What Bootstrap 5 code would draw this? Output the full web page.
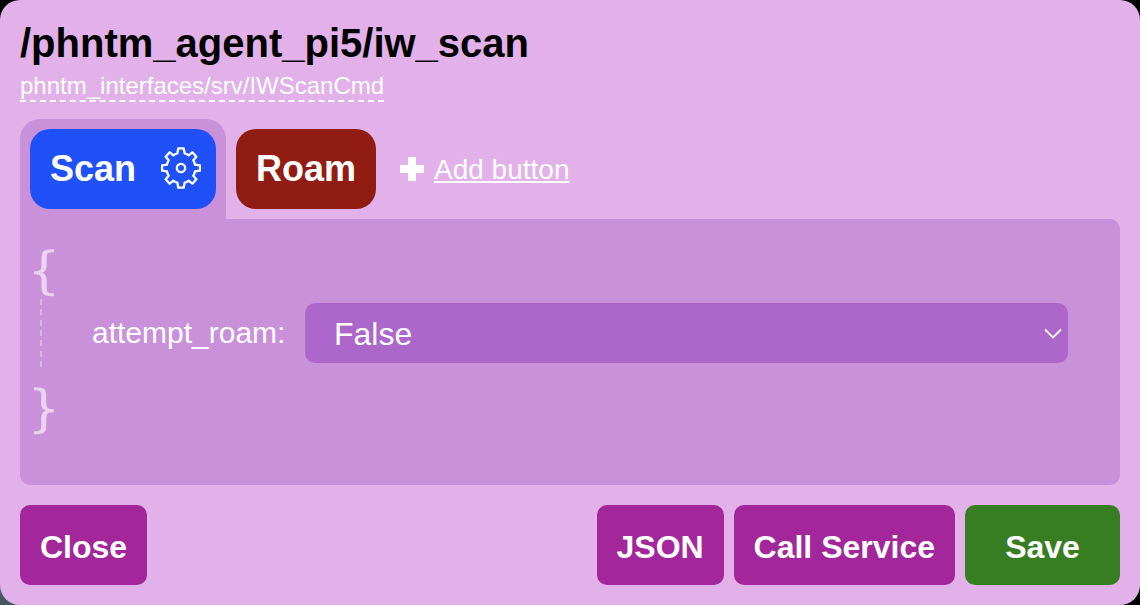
<!DOCTYPE html>
<html lang="en">
<head>
<meta charset="utf-8">
<meta name="viewport" content="width=device-width, initial-scale=1">
<title>Service input</title>
<link rel="stylesheet" href="https://cdn.jsdelivr.net/npm/bootstrap@5.3.0/dist/css/bootstrap.min.css">
<style>
body { background: linear-gradient(90deg, #46585f 0 50%, #000 50%) bottom / 100% 40px no-repeat #000; font-family: "Liberation Sans", Arial, sans-serif; color: #fff; }
.dialog-box { height: 605px; padding: 20px; background: #e2b1e9; border-radius: 20px; }
.dialog-title { font-size: 40px; line-height: 46px; font-weight: 700; color: #000; }
.msg-type { font-size: 24px; line-height: 28px; height: 30px; margin-top: 6px; color: #fff; border-bottom: 2px dashed #fff; text-decoration: none; }
.tab-strip { margin-top: 17px; height: 100px; }
.tab-active { padding: 10px; background: #ca91db; border-radius: 20px 20px 0 0; }
.tab-btn { height: 80px; padding: 0 20px; border: 0; border-radius: 20px; font-size: 36px; font-weight: 700; line-height: 80px; color: #fff; }
.tab-scan { width: 186px; padding-right: 15px; background: #2050f8; }
.tab-scan svg { margin-bottom: 2px; }
.tab-roam { width: 140px; background: #911c13; margin: 10px 0 0 10px; }
.add-link { margin-left: 24px; gap: 10px; font-size: 28px; line-height: 32px; color: #fff; }
.add-link span { padding-top: 2px; text-decoration: underline; text-decoration-thickness: 2px; text-underline-offset: 2px; }
.editor { height: 266px; padding: 22px 52px 0 12px; background: #ca91db; border-radius: 0 10px 10px 10px; }
.brace { height: 58px; margin-left: -4px; font: 50px/60px "DejaVu Serif", serif; color: #ecd3f2; -webkit-text-stroke: .4px #ecd3f2; }
.fields { height: 68px; margin: 0 0 12px 8px; }
.guide { width: 2px; background: repeating-linear-gradient(#dcb5e7 0 6px, transparent 6px 10.35px); }
.field-label { margin-left: 50px; width: 213px; padding-bottom: 1px; font-size: 30px; }
.field-select { height: 60px; padding: 0 6px 0 29px; border-radius: 10px; background: #ad66ca; font-size: 32px; }
.field-select span { padding-top: 1px; }
.field-select svg { margin-top: 2px; }
.dialog-foot { margin-top: 20px; gap: 10px; }
.foot-btn { height: 80px; padding: 4px 20px 0; border: 0; border-radius: 10px; background: #a3269b; color: #fff; font-size: 32px; font-weight: 700; line-height: 77px; white-space: nowrap; }
.foot-json { width: 127px; }
.foot-save { width: 155px; background: #377d22; }
</style>
</head>
<body>
<main class="dialog-box d-flex flex-column overflow-hidden">
  <h1 class="dialog-title m-0">/phntm_agent_pi5/iw_scan</h1>
  <a href="#" class="msg-type align-self-start">phntm_interfaces/srv/IWScanCmd</a>

  <div class="tab-strip d-flex flex-shrink-0">
    <div class="tab-active">
      <button class="btn tab-btn tab-scan d-flex align-items-center justify-content-between">
        <span>Scan</span>
        <svg width="40" height="42" viewBox="-60 -63 120 126" fill="none" stroke="#fff" stroke-width="7" stroke-linejoin="round" aria-hidden="true">
          <path d="M-8-59H8L11-44Q17-43 23-38L34-47L46-34L37-23Q41-17 42-10L57-8V8L42 10Q41 17 37 23L46 34L34 47L23 38Q17 43 11 44L8 59H-8L-11 44Q-17 43-23 38L-34 47L-46 34L-37 23Q-41 17-42 10L-57 8V-8L-42-10Q-41-17-37-23L-46-34L-34-47L-23-38Q-17-43-11-44Z"/>
          <circle r="12.5"/>
        </svg>
      </button>
    </div>
    <button class="btn tab-btn tab-roam">Roam</button>
    <a href="#" class="add-link d-flex align-items-center text-decoration-none">
      <svg width="24" height="24" viewBox="0 0 24 24" fill="#fff" aria-hidden="true"><path d="M8 0h8v8h8v8h-8v8H8v-8H0V8h8z"/></svg>
      <span>Add button</span>
    </a>
  </div>

  <section class="editor flex-shrink-0">
    <div class="brace">{</div>
    <div class="fields d-flex align-items-center">
      <div class="guide align-self-stretch"></div>
      <label class="field-label">attempt_roam:</label>
      <div class="field-select flex-grow-1 d-flex align-items-center justify-content-between" role="combobox">
        <span>False</span>
        <svg width="18" height="12" viewBox="0 0 18 12" fill="none" stroke="#fff" stroke-width="1.8" aria-hidden="true"><path d="M1 1.5l8 8 8-8"/></svg>
      </div>
    </div>
    <div class="brace">}</div>
  </section>

  <footer class="dialog-foot d-flex">
    <button class="btn foot-btn me-auto">Close</button>
    <button class="btn foot-btn foot-json">JSON</button>
    <button class="btn foot-btn">Call Service</button>
    <button class="btn foot-btn foot-save">Save</button>
  </footer>
</main>
<script src="https://cdn.jsdelivr.net/npm/bootstrap@5.3.0/dist/js/bootstrap.bundle.min.js"></script>
</body>
</html>
